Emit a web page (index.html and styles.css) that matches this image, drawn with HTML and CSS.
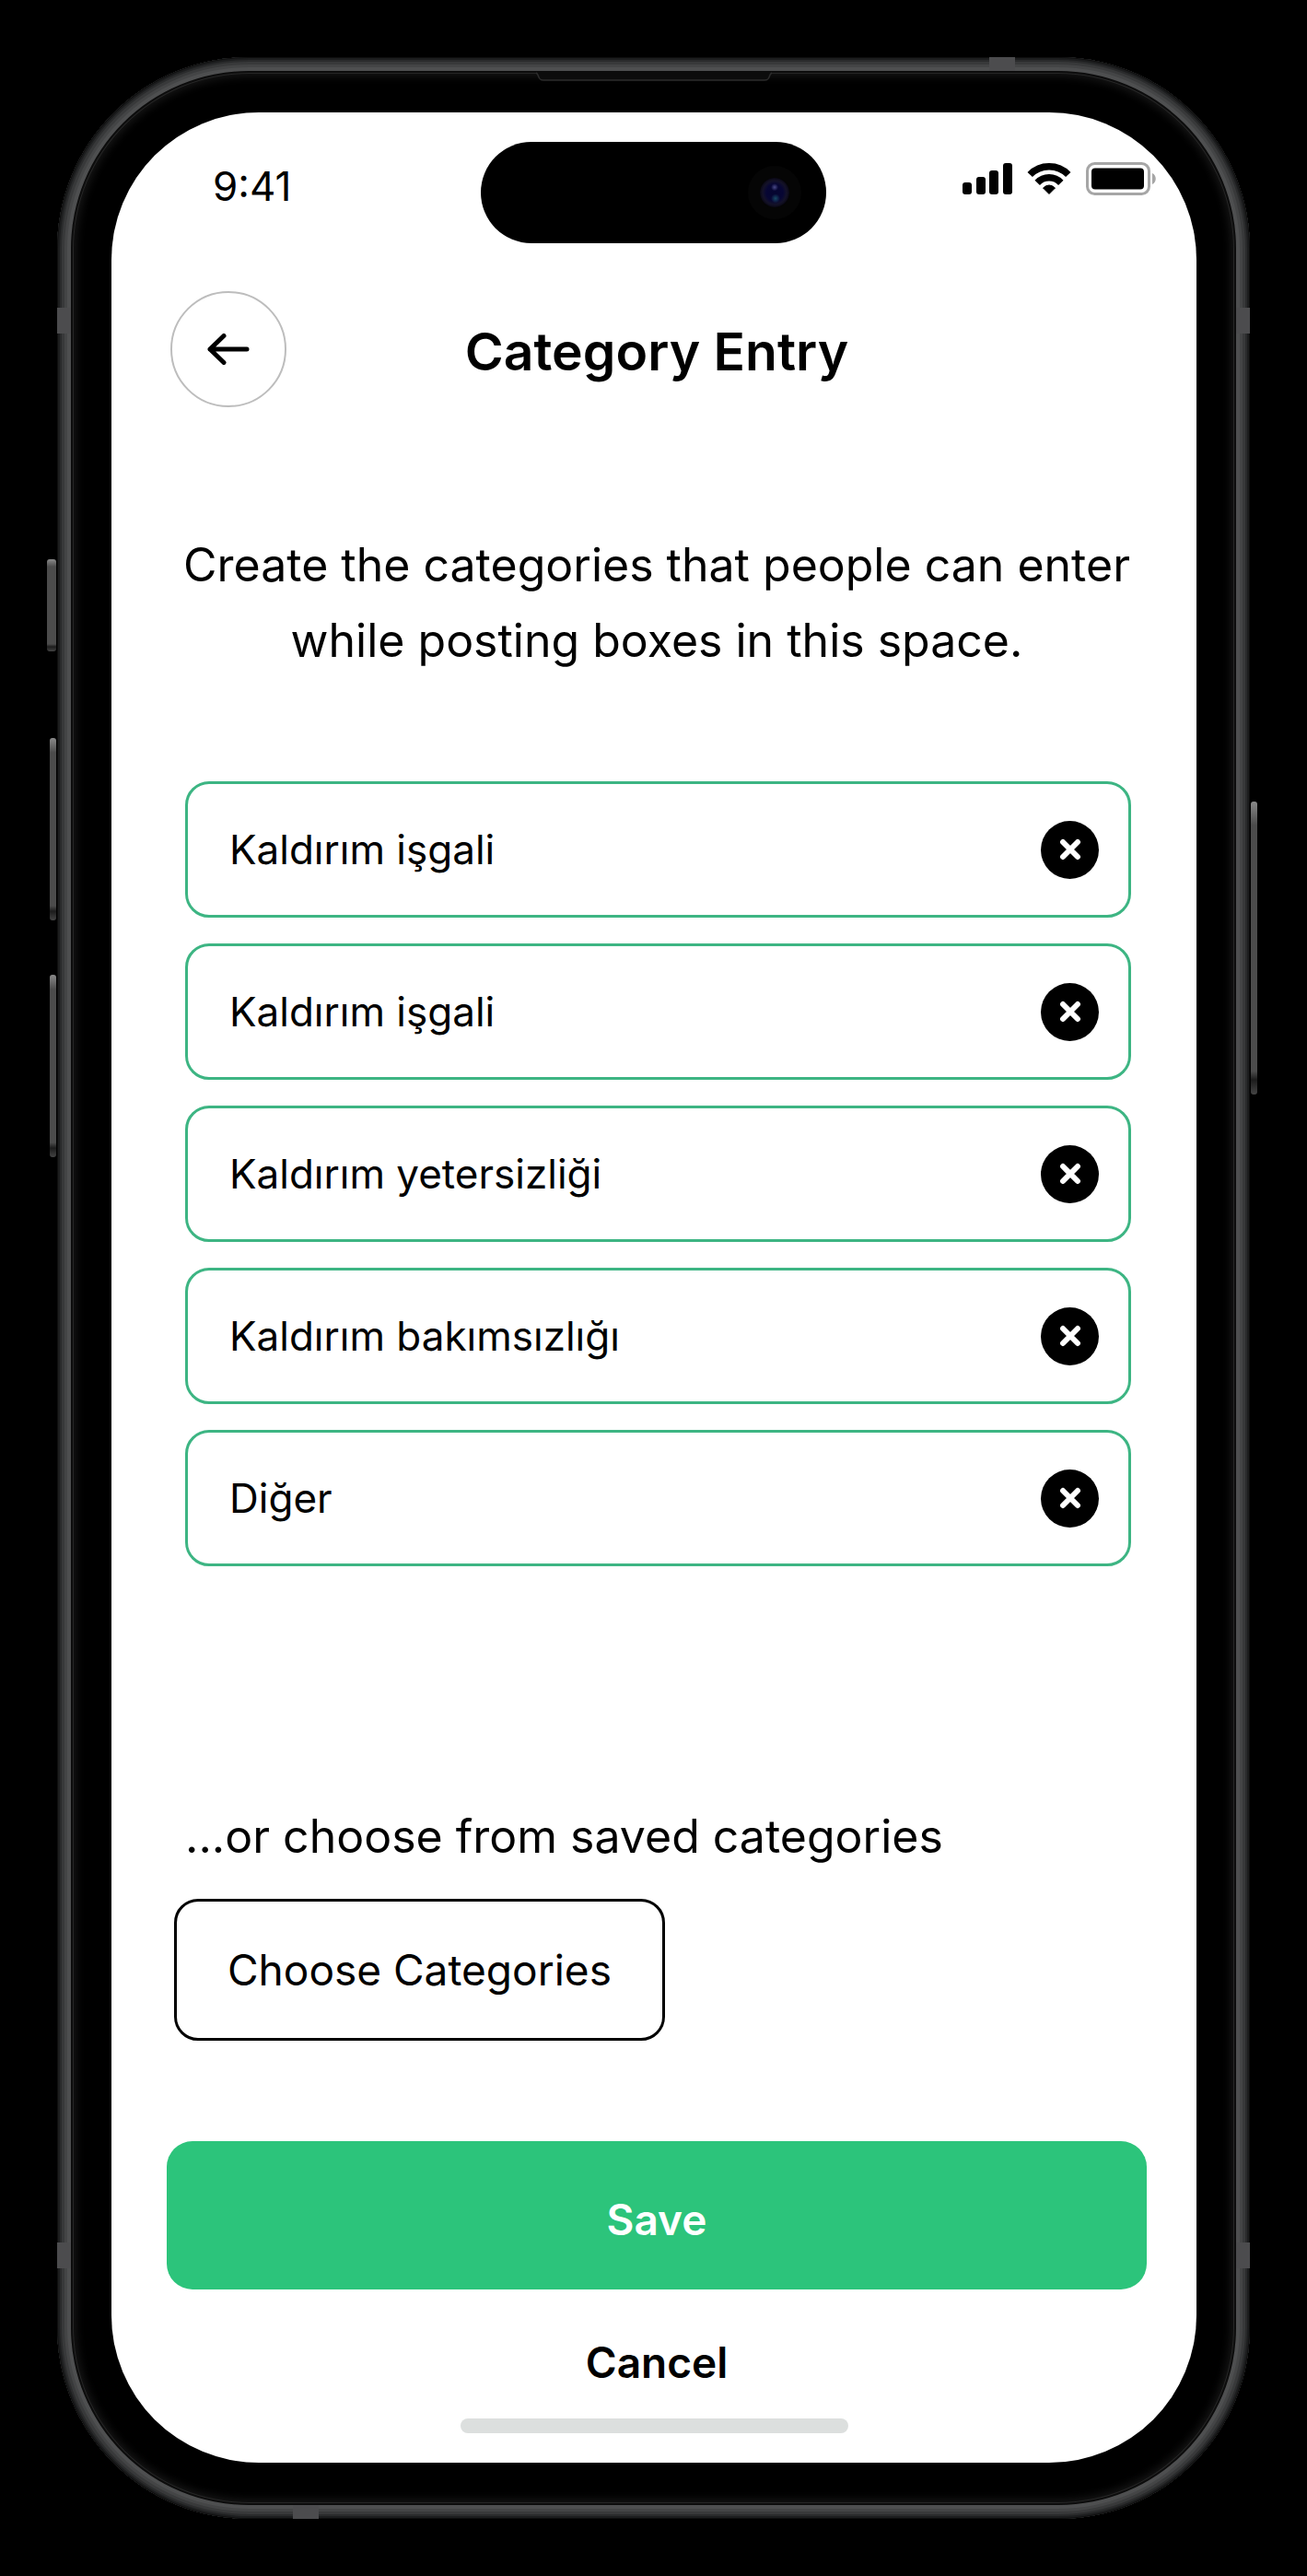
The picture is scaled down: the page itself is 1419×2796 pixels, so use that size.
FILE: index.html
```
<!DOCTYPE html>
<html lang="en">

<head>
    <meta charset="UTF-8">
    <meta name="viewport" content="width=device-width, initial-scale=1.0">
    <title>Category Entry</title>
    <link rel="stylesheet" href="styles.css">
</head>

<body>
    <div class="phone">
        <!-- side buttons -->
        <span class="key key-action"></span>
        <span class="key key-up"></span>
        <span class="key key-down"></span>
        <span class="key key-power"></span>

        <!-- antenna bands -->
        <span class="band band-left-top"></span>
        <span class="band band-left-bottom"></span>
        <span class="band band-right-top"></span>
        <span class="band band-right-bottom"></span>
        <span class="band band-top"></span>
        <span class="band band-bottom"></span>

        <svg class="speaker" viewBox="0 0 258 11" aria-hidden="true">
            <path d="M1 1C5 3 2 9 9 9H249C256 9 253 3 257 1" fill="#0c0c0c" stroke="#2c2c2c" stroke-width="1.5" />
        </svg>

        <div class="island"><span class="camera"></span></div>

        <div class="screen">
            <div class="status">
                <span class="time">9:41</span>
                <div class="status-icons">
                    <svg width="54" height="36" viewBox="0 0 54 36" aria-hidden="true">
                        <rect x="0" y="22" width="10" height="13" rx="3" />
                        <rect x="15" y="16" width="10" height="19" rx="3" />
                        <rect x="29" y="9" width="10" height="26" rx="3" />
                        <rect x="44" y="1" width="10" height="34" rx="3" />
                    </svg>
                    <svg width="48" height="36" viewBox="0 0 48 36" aria-hidden="true">
                        <path d="M3.2 13.5A29 29 0 0 1 44.8 13.5M11.2 22.4A17.5 17.5 0 0 1 36.8 22.4" fill="none" stroke="#000" stroke-width="7.5" />
                        <path d="M24 34.5L17.5 28Q24 22 30.5 28Z" stroke="#000" stroke-width="1" stroke-linejoin="round" />
                    </svg>
                    <svg width="77" height="36" viewBox="0 0 77 36" aria-hidden="true">
                        <rect x="1.5" y="1.5" width="67" height="33" rx="8" fill="none" stroke="#a6a6a6" stroke-width="3" />
                        <rect x="6" y="6.5" width="57" height="23" rx="4" />
                        <path d="M72 12C77 14 77 22 72 24Z" fill="#a6a6a6" />
                    </svg>
                </div>
            </div>

            <main class="content">
                <header class="header">
                    <button class="back" type="button" aria-label="Back">
                        <svg width="46" height="34" viewBox="0 0 46 34" aria-hidden="true">
                            <path d="M3 17H43M18 2.5L3 17L18 31.5" />
                        </svg>
                    </button>
                    <h1 class="title">Category Entry</h1>
                </header>

                <p class="intro">Create the categories that people can enter while posting boxes in this space.</p>

                <ul class="categories">
                    <li class="category">
                        <input type="text" value="Kaldırım işgali" aria-label="Category 1">
                        <button class="remove" type="button" aria-label="Remove category 1">
                            <svg width="24" height="24" viewBox="0 0 24 24" aria-hidden="true"><path d="M4 4L20 20M20 4L4 20" /></svg>
                        </button>
                    </li>
                    <li class="category">
                        <input type="text" value="Kaldırım işgali" aria-label="Category 2">
                        <button class="remove" type="button" aria-label="Remove category 2">
                            <svg width="24" height="24" viewBox="0 0 24 24" aria-hidden="true"><path d="M4 4L20 20M20 4L4 20" /></svg>
                        </button>
                    </li>
                    <li class="category">
                        <input type="text" value="Kaldırım yetersizliği" aria-label="Category 3">
                        <button class="remove" type="button" aria-label="Remove category 3">
                            <svg width="24" height="24" viewBox="0 0 24 24" aria-hidden="true"><path d="M4 4L20 20M20 4L4 20" /></svg>
                        </button>
                    </li>
                    <li class="category">
                        <input type="text" value="Kaldırım bakımsızlığı" aria-label="Category 4">
                        <button class="remove" type="button" aria-label="Remove category 4">
                            <svg width="24" height="24" viewBox="0 0 24 24" aria-hidden="true"><path d="M4 4L20 20M20 4L4 20" /></svg>
                        </button>
                    </li>
                    <li class="category">
                        <input type="text" value="Diğer" aria-label="Category 5">
                        <button class="remove" type="button" aria-label="Remove category 5">
                            <svg width="24" height="24" viewBox="0 0 24 24" aria-hidden="true"><path d="M4 4L20 20M20 4L4 20" /></svg>
                        </button>
                    </li>
                </ul>

                <p class="saved">...or choose from saved categories</p>
                <button class="choose" type="button">Choose Categories</button>

                <button class="save" type="button">Save</button>
                <button class="cancel" type="button">Cancel</button>
            </main>

            <div class="home-bar"></div>
        </div>
    </div>
</body>

</html>
```
FILE: styles.css
```
* {
    box-sizing: border-box;
    margin: 0;
    padding: 0;
}

body {
    background: #000;
    color: #000;
    font-family: Inter, "Liberation Sans", sans-serif;
    font-size: 46px;
}

button,
input {
    font: inherit;
    color: inherit;
    background: none;
    border: none;
}

button {
    cursor: pointer;
}

/* device */
.phone {
    position: relative;
    margin: 62px;
    padding: 60px 58px 61px 59px;
    border-radius: 208px;
    background: #000;
    box-shadow:
        inset 0 0 0 1px #0e0e0e,
        inset 0 0 0 3px #1c1d1e,
        inset 0 0 0 5px #2a2b2c,
        inset 0 0 0 8px #38393a,
        inset 0 0 0 11px #444546,
        inset 0 0 0 15px #4e4f50,
        inset 0 0 0 17px #0c0c0c,
        inset 0 0 0 18px #262626,
        inset 0 0 10px 21px #161616;
}

.key {
    position: absolute;
    border-radius: 3px;
    background: linear-gradient(#8a8a8a, #4c4c4c 8%, #4c4c4c 92%, #1c1c1c 95%, #444);
}

.key-action {
    left: -11px;
    top: 545px;
    width: 10px;
    height: 100px;
}

.key-up,
.key-down {
    left: -8px;
    width: 7px;
    height: 198px;
}

.key-up {
    top: 739px;
}

.key-down {
    top: 996px;
}

.key-power {
    right: -8px;
    top: 808px;
    width: 7px;
    height: 318px;
}

.band {
    position: absolute;
    width: 15px;
    height: 28px;
    background: #4c4c4e;
}

.band-left-top,
.band-left-bottom {
    left: 0;
}

.band-right-top,
.band-right-bottom {
    right: 0;
}

.band-left-top,
.band-right-top {
    top: 272px;
}

.band-left-bottom,
.band-right-bottom {
    bottom: 272px;
}

.band-top,
.band-bottom {
    width: 28px;
    height: 15px;
}

.band-top {
    top: 0;
    right: 255px;
}

.band-bottom {
    bottom: 0;
    left: 256px;
}

.speaker {
    position: absolute;
    top: 16px;
    left: 50%;
    width: 258px;
    height: 11px;
    margin-left: -129px;
}

.island {
    position: absolute;
    top: 92px;
    left: 50%;
    width: 375px;
    height: 110px;
    margin-left: -188px;
    padding-right: 40px;
    border-radius: 55px;
    background: #000;
    display: flex;
    align-items: center;
    justify-content: flex-end;
}

.camera {
    width: 32px;
    height: 32px;
    border-radius: 50%;
    background:
        radial-gradient(circle at 50% 32%, #4a4a88 0, transparent 4px),
        radial-gradient(circle at 53% 70%, #184a66 0, transparent 5px),
        radial-gradient(circle, #050530 0, #070634 9px, #141228 13px, #0a0814 16px);
    box-shadow: 0 0 0 13px #050505;
}

/* screen */
.screen {
    background: #fff;
    border-radius: 160px;
    padding: 54px 0 32px;
    overflow: hidden;
}

.status {
    display: flex;
    justify-content: space-between;
    align-items: flex-start;
    padding: 0 43px 0 110px;
}

.time {
    font-size: 44px;
    line-height: 52px;
}

.status-icons {
    display: flex;
    gap: 16px;
}

.status-icons svg {
    display: block;
}

.content {
    display: flex;
    flex-direction: column;
    padding: 88px 54px 0 60px;
}

.header {
    display: grid;
    grid-template-columns: 126px 1fr 126px;
    align-items: end;
    padding: 0 4px;
}

.back {
    display: flex;
    align-items: center;
    justify-content: center;
    width: 126px;
    height: 126px;
    border: 2px solid #bdbdbd;
    border-radius: 50%;
}

.back path {
    fill: none;
    stroke: #000;
    stroke-width: 5;
    stroke-linecap: round;
    stroke-linejoin: round;
}

.title {
    font-size: 57px;
    font-weight: 600;
    line-height: 120px;
    text-align: center;
}

.intro,
.saved {
    font-size: 50px;
    line-height: 82px;
}

.intro {
    margin-top: 130px;
    text-align: center;
}

.categories {
    list-style: none;
    display: flex;
    flex-direction: column;
    gap: 28px;
    margin: 112px 17px 0 20px;
}

.category {
    display: flex;
    align-items: center;
    height: 148px;
    padding: 0 32px 0 45px;
    border: 3px solid #3db583;
    border-radius: 26px;
}

.category input {
    flex: 1;
    min-width: 0;
    font-size: 44px;
    outline: none;
}

.remove {
    display: flex;
    align-items: center;
    justify-content: center;
    width: 63px;
    height: 63px;
    border-radius: 50%;
    background: #000;
}

.remove path {
    stroke: #fff;
    stroke-width: 6;
    stroke-linecap: round;
}

.saved {
    margin: 252px 20px 27px;
}

.choose {
    align-self: flex-start;
    height: 154px;
    margin-left: 8px;
    padding: 0 55px;
    border: 3px solid #000;
    border-radius: 26px;
}

.save {
    height: 161px;
    margin-top: 109px;
    padding-top: 8px;
    border-radius: 28px;
    background: #2cc47b;
    color: #fff;
    font-weight: 600;
}

.cancel {
    align-self: center;
    margin-top: 38px;
    line-height: 82px;
    font-weight: 600;
}

.home-bar {
    width: 421px;
    height: 16px;
    margin: 20px auto 0;
    border-radius: 8px;
    background: #dcdfde;
}
```
